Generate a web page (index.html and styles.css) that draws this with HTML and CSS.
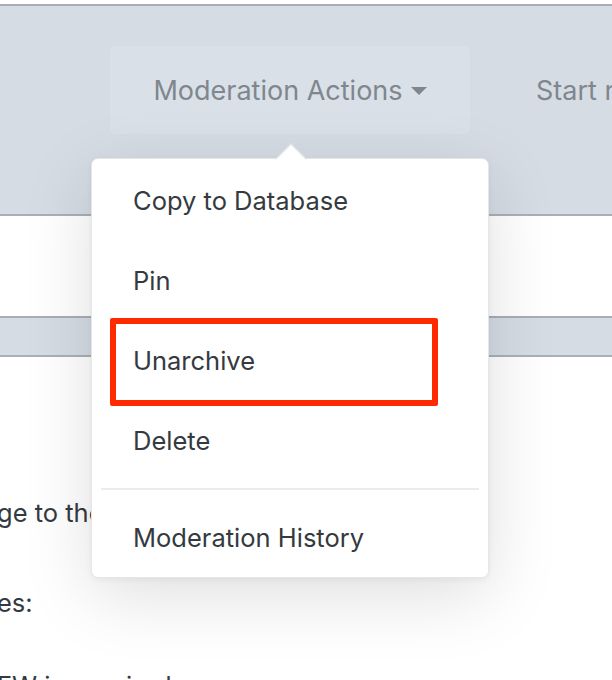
FILE: index.html
```html
<!DOCTYPE html>
<html>
<head>
<meta charset="utf-8">
<link rel="stylesheet" href="styles.css">
</head>
<body>
<div class="page">
  <header class="header">
    <nav class="nav">
      <div class="nav-btn">Moderation Actions <span class="caret"></span></div>
      <div class="nav-item">Start new topic</div>
    </nav>
  </header>
  <div class="gap-area"></div>
  <div class="subbar"></div>
  <div class="content">
    <p class="line line1">ge to the moderators of this forum</p>
    <p class="line line2">es:</p>
    <p class="line line3">FW is required</p>
  </div>

  <div class="dropdown">
    <div class="arrow"></div>
    <div class="item">Copy to Database</div>
    <div class="item">Pin</div>
    <div class="item">Unarchive</div>
    <div class="item">Delete</div>
    <div class="divider"></div>
    <div class="item">Moderation History</div>
  </div>
  <div class="highlight"></div>
</div>
</body>
</html>
```
FILE: styles.css
```css
html, body {
  margin: 0;
  padding: 0;
  background: #ffffff;
}
body {
  width: 612px;
  height: 680px;
  overflow: hidden;
  font-family: Inter, "Liberation Sans", sans-serif;
}
.page {
  position: relative;
  padding-top: 4px;
  height: 676px;
  overflow: hidden;
}
.header {
  height: 208px;
  background: #d5dce4;
  border-top: 2px solid #a9aeb5;
  border-bottom: 2px solid #aab0b7;
}
.nav {
  display: flex;
  align-items: center;
  gap: 66px;
  padding: 40px 0 0 110px;
  white-space: nowrap;
}
.nav-btn {
  flex-shrink: 0;
  display: flex;
  align-items: center;
  justify-content: center;
  gap: 8px;
  width: 360px;
  height: 88px;
  background: #d9e0e7;
  border-radius: 5px;
  color: #80868d;
  font-size: 27px;
  box-sizing: border-box;
}
.caret {
  width: 0;
  height: 0;
  border-left: 8px solid transparent;
  border-right: 8px solid transparent;
  border-top: 8px solid #80868d;
  margin-top: 2px;
}
.nav-item {
  flex-shrink: 0;
  color: #80868d;
  font-size: 27px;
}
.gap-area {
  height: 100px;
}
.subbar {
  height: 37px;
  background: #d5dce4;
  border-top: 2px solid #a9aeb5;
  border-bottom: 2px solid #aab0b7;
}
.content {
  color: #343a40;
  font-size: 25.5px;
}
.line {
  margin: 0;
  white-space: nowrap;
  margin-left: -3px;
}
.line1 {
  padding-top: 140px;
}
.line2 {
  padding-top: 59px;
}
.line3 {
  padding-top: 52px;
}
.dropdown {
  position: absolute;
  left: 91px;
  top: 158px;
  width: 398px;
  height: 420px;
  box-sizing: border-box;
  background: #ffffff;
  border: 1px solid #e4e6e8;
  border-radius: 7px;
  padding: 1px 0;
  box-shadow: 0 18px 70px rgba(0, 0, 0, 0.13), 0 2px 6px rgba(0, 0, 0, 0.05);
}
.arrow {
  position: absolute;
  left: 188px;
  top: -11px;
  width: 21px;
  height: 21px;
  background: #ffffff;
  transform: rotate(45deg);
  border-left: 1px solid #e0e3e6;
  border-top: 1px solid #e0e3e6;
}
.item {
  position: relative;
  height: 80px;
  display: flex;
  align-items: center;
  padding-left: 41px;
  color: #343a40;
  font-size: 25.5px;
}
.divider {
  height: 2px;
  background: #e9ecef;
  margin: 8px 9px 7px;
}
.highlight {
  position: absolute;
  left: 110px;
  top: 318px;
  width: 328px;
  height: 88px;
  box-sizing: border-box;
  border: 6px solid #ff2a00;
  border-radius: 2px;
}
```
